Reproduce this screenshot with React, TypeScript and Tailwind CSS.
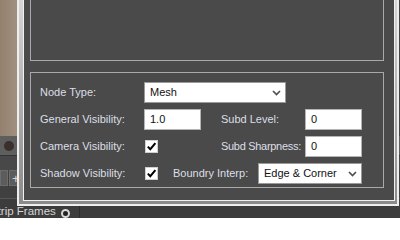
const labelCls = "text-[11px] leading-none text-[#dcdfe6] whitespace-nowrap";

function Chevron() {
  return (
    <svg width="9" height="6" viewBox="0 0 9 6" className="shrink-0">
      <path d="M1 1 L4.5 4.5 L8 1" fill="none" stroke="#505050" strokeWidth="1.7" />
    </svg>
  );
}

function Check() {
  return (
    <div className="w-[13px] h-[13px] bg-white border border-[#d0d0d0] flex items-center justify-center">
      <svg width="11" height="11" viewBox="0 0 11 11">
        <path d="M1.8 5.6 L4.3 8.2 L9.4 2.2" fill="none" stroke="#000" strokeWidth="2" />
      </svg>
    </div>
  );
}

function TextBox({ value }: { value: string }) {
  return (
    <div className="w-[57px] h-[21px] bg-white border border-[#b4b4b4] flex items-center pl-[5px] text-[11px] text-[#111]">
      {value}
    </div>
  );
}

function Select({ value, width }: { value: string; width: string }) {
  return (
    <div
      className={`${width} h-[21px] bg-white border border-[#9a9a9a] flex items-center justify-between pl-[5px] pr-[4px] text-[11px] text-[#111]`}
    >
      <span>{value}</span>
      <Chevron />
    </div>
  );
}

export default function App() {
  return (
    <div className="relative w-[400px] h-[218px] overflow-hidden bg-[#454545] font-['Liberation_Sans',Arial,sans-serif]">
      {/* Maya panels behind the dialog */}
      <div className="flex flex-col h-full">
        <div className="h-[142px] flex">
          <div className="w-[18px] bg-linear-to-r from-[#94806e] to-[#a19181]" />
        </div>
        <div className="h-[19px] bg-[#5e5e5e] flex items-center pl-[4px]">
          <div className="w-[10px] h-[10px] rounded-full bg-[#3b2f2b]" />
        </div>
        <div className="h-[1px] bg-[#333]" />
        <div className="h-[15px] bg-[#484848]" />
        <div className="h-[17px] bg-[#3f3f3f] flex gap-[1px]">
          <div className="w-[8px] bg-[#5c5c5c] border border-[#6c6c6c]" />
          <div className="w-[20px] bg-[#5c5c5c] border border-[#6c6c6c] flex items-center pl-[2px] text-[13px] leading-none text-[#d8d8d8]">
            +
          </div>
        </div>
        <div className="h-[12px] bg-[#404040]" />
        <div className="flex-1 bg-[#3c3c3c] border-t border-[#575757] flex">
          <div className="w-[80px] flex items-start pt-[7px] border-r border-[#2c2c2c]">
            <span className="ml-[-10px] text-[11.5px] leading-none text-[#d6d6d6] whitespace-nowrap">
              Strip Frames
            </span>
            <div className="ml-[5px] mt-[3px] w-[9px] h-[9px] rounded-full border-2 border-[#d8d8d8] bg-[#222]" />
          </div>
        </div>
      </div>

      {/* dialog window */}
      <div className="absolute left-[17px] top-0 w-[382px] h-[206px] border-x-2 border-b-2 border-[#eeeeee] bg-linear-to-b from-[#d6d6d6] to-[#8a8a8a] pl-[4px] pr-[2px] pb-[3px]">
        <div className="h-full border-x border-b border-[#f0f0f0] bg-[#4a4a4a] pl-[6px] pr-[10px]">
          <div className="h-[61px] border-x border-b border-[#a9a9a9]" />
          <div className="mt-[11px] h-[116px] border border-[#a9a9a9] pt-[9px] pl-[9px] flex flex-col gap-[6px]">
            <div className="flex items-center h-[21px]">
              <div className={`w-[104px] ${labelCls}`}>Node Type:</div>
              <Select value="Mesh" width="w-[142px]" />
            </div>
            <div className="flex items-center h-[21px]">
              <div className={`w-[104px] ${labelCls}`}>General Visibility:</div>
              <TextBox value="1.0" />
              <div className={`ml-[20px] w-[84px] ${labelCls}`}>Subd Level:</div>
              <TextBox value="0" />
            </div>
            <div className="flex items-center h-[21px]">
              <div className={`w-[104px] ${labelCls}`}>Camera Visibility:</div>
              <div className="w-[57px] pl-[1px]">
                <Check />
              </div>
              <div className={`ml-[20px] w-[84px] tracking-[-0.3px] ${labelCls}`}>Subd Sharpness:</div>
              <TextBox value="0" />
            </div>
            <div className="flex items-center h-[21px]">
              <div className={`w-[104px] ${labelCls}`}>Shadow Visibility:</div>
              <div className="w-[29px] pl-[1px]">
                <Check />
              </div>
              <div className={`w-[85px] ${labelCls}`}>Boundry Interp:</div>
              <Select value={"Edge & Corner"} width="w-[104px]" />
            </div>
          </div>
        </div>
      </div>
    </div>
  );
}
